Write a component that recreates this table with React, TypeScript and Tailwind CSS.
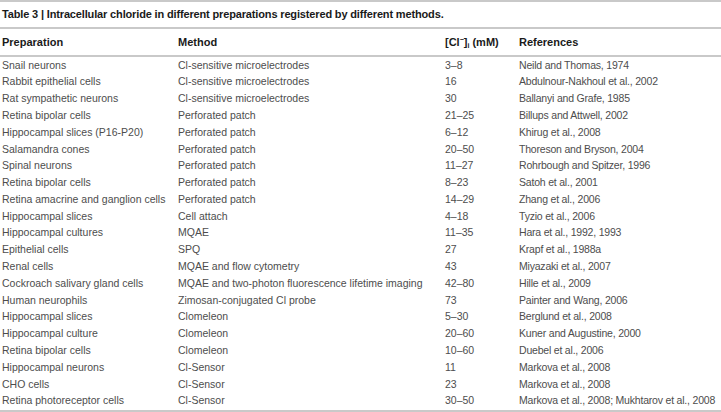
const rows: [string, string, string, string][] = [
  ["Snail neurons", "Cl-sensitive microelectrodes", "3–8", "Neild and Thomas, 1974"],
  ["Rabbit epithelial cells", "Cl-sensitive microelectrodes", "16", "Abdulnour-Nakhoul et al., 2002"],
  ["Rat sympathetic neurons", "Cl-sensitive microelectrodes", "30", "Ballanyi and Grafe, 1985"],
  ["Retina bipolar cells", "Perforated patch", "21–25", "Billups and Attwell, 2002"],
  ["Hippocampal slices (P16-P20)", "Perforated patch", "6–12", "Khirug et al., 2008"],
  ["Salamandra cones", "Perforated patch", "20–50", "Thoreson and Bryson, 2004"],
  ["Spinal neurons", "Perforated patch", "11–27", "Rohrbough and Spitzer, 1996"],
  ["Retina bipolar cells", "Perforated patch", "8–23", "Satoh et al., 2001"],
  ["Retina amacrine and ganglion cells", "Perforated patch", "14–29", "Zhang et al., 2006"],
  ["Hippocampal slices", "Cell attach", "4–18", "Tyzio et al., 2006"],
  ["Hippocampal cultures", "MQAE", "11–35", "Hara et al., 1992, 1993"],
  ["Epithelial cells", "SPQ", "27", "Krapf et al., 1988a"],
  ["Renal cells", "MQAE and flow cytometry", "43", "Miyazaki et al., 2007"],
  ["Cockroach salivary gland cells", "MQAE and two-photon fluorescence lifetime imaging", "42–80", "Hille et al., 2009"],
  ["Human neurophils", "Zimosan-conjugated Cl probe", "73", "Painter and Wang, 2006"],
  ["Hippocampal slices", "Clomeleon", "5–30", "Berglund et al., 2008"],
  ["Hippocampal culture", "Clomeleon", "20–60", "Kuner and Augustine, 2000"],
  ["Retina bipolar cells", "Clomeleon", "10–60", "Duebel et al., 2006"],
  ["Hippocampal neurons", "Cl-Sensor", "11", "Markova et al., 2008"],
  ["CHO cells", "Cl-Sensor", "23", "Markova et al., 2008"],
  ["Retina photoreceptor cells", "Cl-Sensor", "30–50", "Markova et al., 2008; Mukhtarov et al., 2008"],
];

const cols = "grid grid-cols-[176px_267px_74px_1fr] pl-[2px]";

export default function App() {
  return (
    <div className="w-[721px] h-[412px] bg-white overflow-hidden font-['Liberation_Sans',Arial,sans-serif]">
      <div className="border-t-2 border-[#c9c9c9]" />
      <div className="h-[25px] flex items-center pl-[2px] text-[11px] font-bold text-[#1a1a1a] tracking-[-0.15px]">
        Table 3 | Intracellular chloride in different preparations registered by different methods.
      </div>
      <div className="border-t-2 border-[#c9c9c9]" />
      <div className={`${cols} h-[26px] items-center text-[11px] font-bold text-[#1a1a1a]`}>
        <div>Preparation</div>
        <div>Method</div>
        <div>
          [Cl<sup className="text-[7px]">−</sup>]<sub className="text-[7px]">i</sub> (mM)
        </div>
        <div>References</div>
      </div>
      <div className="border-t-2 border-[#c9c9c9]" />
      <div className="h-[353px] text-[10.5px] text-[#4d4d4d]">
        {rows.map((r, i) => (
          <div key={i} className={`${cols} h-[16.8px] items-center whitespace-nowrap`}>
            <div>{r[0]}</div>
            <div>{r[1]}</div>
            <div>{r[2]}</div>
            <div className="tracking-[-0.2px]">{r[3]}</div>
          </div>
        ))}
      </div>
      <div className="border-t-2 border-[#c9c9c9]" />
    </div>
  );
}
